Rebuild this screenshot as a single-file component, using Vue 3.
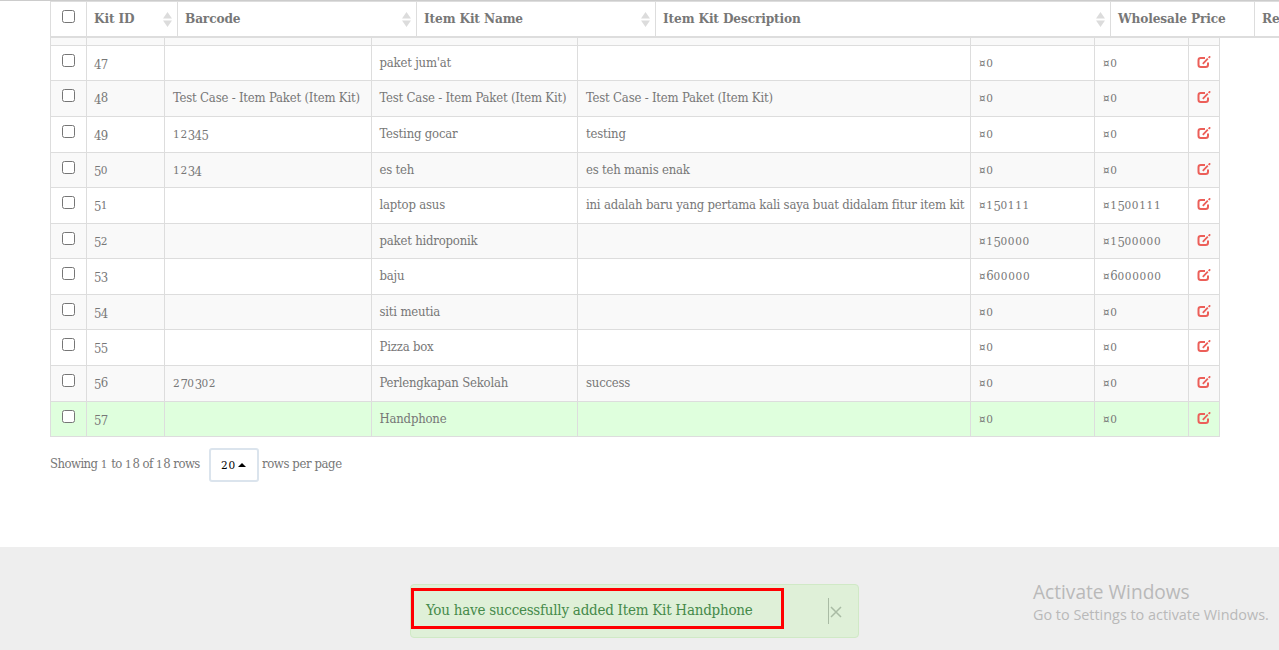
<script setup>
import { h } from 'vue'

const headers = [
  { label: 'Kit ID', sort: true },
  { label: 'Barcode', sort: true },
  { label: 'Item Kit Name', sort: true },
  { label: 'Item Kit Description', sort: true },
  { label: 'Wholesale Price' },
  { label: 'Retail Price' },
]

const paket = 'Test Case - Item Paket (Item Kit)'
const rows = [
  { id: '47', name: "paket jum'at", wholesale: '0', retail: '0', height: 35 },
  { id: '48', barcode: paket, name: paket, description: paket, wholesale: '0', retail: '0', height: 36 },
  { id: '49', barcode: '12345', name: 'Testing gocar', description: 'testing', wholesale: '0', retail: '0', height: 36 },
  { id: '50', barcode: '1234', name: 'es teh', description: 'es teh manis enak', wholesale: '0', retail: '0', height: 35 },
  { id: '51', name: 'laptop asus', description: 'ini adalah baru yang pertama kali saya buat didalam fitur item kit', wholesale: '150111', retail: '1500111', height: 36 },
  { id: '52', name: 'paket hidroponik', wholesale: '150000', retail: '1500000', height: 35 },
  { id: '53', name: 'baju', wholesale: '600000', retail: '6000000', height: 36 },
  { id: '54', name: 'siti meutia', wholesale: '0', retail: '0', height: 35 },
  { id: '55', name: 'Pizza box', wholesale: '0', retail: '0', height: 36 },
  { id: '56', barcode: '270302', name: 'Perlengkapan Sekolah', description: 'success', wholesale: '0', retail: '0', height: 36 },
  { id: '57', name: 'Handphone', wholesale: '0', retail: '0', height: 35, added: true },
]

// Old-style figures: 0-2 at x-height, 3-5, 7 and 9 dropped under the baseline.
function OldStyle(props) {
  const runs = String(props.text || '').match(/[012]+|[34579]+|[^0-9]+|[68]+/g) || []
  return h('span', { class: 'figures' }, runs.map((run) => {
    const kind = /[012]/.test(run) ? 'low' : /[34579]/.test(run) ? 'drop' : /[68]/.test(run) ? 'high' : 'plain'
    return h('span', { class: kind }, run)
  }))
}
OldStyle.props = ['text']
</script>

<template>
  <div class="page">
    <div class="head">
      <div class="th pick"><span class="box"></span></div>
      <div v-for="c in headers" :key="c.label" class="th">
        <span>{{ c.label }}</span>
        <svg v-if="c.sort" class="sort" width="9" height="15" viewBox="0 0 9 15">
          <path d="M0 6.5 4.5 0 9 6.5ZM0 8.5 4.5 15 9 8.5Z" fill="#dcdcdc" />
        </svg>
      </div>
    </div>

    <div class="body">
      <div class="row stub"><i v-for="n in 8" :key="n" class="td"></i></div>
      <div v-for="(r, i) in rows" :key="r.id" class="row" :class="{ odd: i % 2 === 1, added: r.added }" :style="{ height: r.height + 'px' }">
        <div class="td pick"><span class="box"></span></div>
        <div class="td id"><OldStyle :text="r.id" /></div>
        <div class="td"><OldStyle :text="r.barcode" /></div>
        <div class="td name">{{ r.name }}</div>
        <div class="td">{{ r.description }}</div>
        <div class="td price"><span class="cur">¤</span><OldStyle :text="r.wholesale" /></div>
        <div class="td price"><span class="cur">¤</span><OldStyle :text="r.retail" /></div>
        <div class="td edit">
          <svg width="14" height="13" viewBox="0 0 14 13" fill="none" stroke="#ec5f59">
            <path d="M8 2H3.8Q1.5 2 1.5 4.3V8.7Q1.5 11 3.8 11H8.7Q11 11 11 8.7V6.5" stroke-width="2" />
            <path d="M5.8 7.8 10.8 2.6M11.6 1.8 13.2 .3" stroke-width="1.8" />
          </svg>
        </div>
      </div>
    </div>

    <div class="pager">
      <OldStyle class="showing" text="Showing 1 to 18 of 18 rows" />
      <span class="size"><OldStyle text="20" /><i class="caret"></i></span>
      <span class="per">rows per page</span>
    </div>

    <div class="footer">
      <div class="alert">
        <div class="message">You have successfully added Item Kit Handphone</div>
        <div class="close">
          <svg width="12" height="12" viewBox="0 0 12 12"><path d="M1 1 11 11M11 1 1 11" stroke="#a9bba4" stroke-width="1.5" /></svg>
        </div>
      </div>
      <div class="windows">
        <div class="activate">Activate Windows</div>
        <div class="settings">Go to Settings to activate Windows.</div>
      </div>
    </div>
  </div>
</template>

<style>
body { margin: 0; overflow: hidden; background: #fff; }
</style>

<style scoped>
.page { width: 1279px; height: 650px; overflow: hidden; display: flex; flex-direction: column; box-sizing: border-box; border-top: 1px solid #ccc; font-family: "DejaVu Serif Condensed", "DejaVu Serif", serif; font-stretch: condensed; font-size: 13px; color: #777; letter-spacing: -0.2px; }
.page * { box-sizing: border-box; }
.head { display: grid; grid-template-columns: 36px 91px 239px 239px 455px 144px 140px; height: 37px; flex: none; margin-left: 50px; border-top: 1px solid #ddd; border-bottom: 2px solid #ddd; border-left: 1px solid #ddd; font-weight: bold; font-size: 13.5px; letter-spacing: -0.13px; }
.th { display: flex; justify-content: space-between; border-right: 1px solid #ddd; padding: 8px 5px 0 7px; line-height: 17px; white-space: nowrap; }
.sort { margin-top: 2px; }
.th.pick { padding: 8px 0 0 11px; }
.box { display: block; width: 13px; height: 13px; border: 1px solid #767676; border-radius: 2.5px; background: #fff; }
.body { width: 1170px; margin-left: 50px; border-left: 1px solid #ddd; flex: none; }
.row { display: grid; grid-template-columns: 36px 78px 207px 206px 393px 124px 94px 31px; border-bottom: 1px solid #ddd; background: #fff; }
.row.odd, .row.stub { background: #f9f9f9; }
.row.stub { height: 8px; }
.row.added { background: #dfffdd; }
.td { border-right: 1px solid #ddd; padding: 8px 0 0 8px; line-height: 17px; white-space: nowrap; }
.td.name { padding-left: 7.5px; }
.stub .td { padding: 0; }
.td.pick { padding: 8px 0 0 11px; }
.td.id { padding: 8px 0 0 7px; }
.td.edit { padding: 10px 0 0 8px; }
.td.edit svg { display: block; }
.cur { font-size: 11.5px; letter-spacing: 0.6px; }
.figures :deep(.low) { font-family: "DejaVu Serif", serif; font-stretch: normal; font-size: 10.5px; letter-spacing: 0.7px; }
.figures :deep(.drop) { display: inline-block; line-height: 1; transform: translateY(2px); letter-spacing: -0.6px; }
.pager { display: flex; height: 34px; margin: 11px 0 0 50px; flex: none; line-height: 31px; white-space: nowrap; letter-spacing: -0.4px; }
.showing { width: 159px; letter-spacing: -0.55px; }
.size { width: 50px; height: 34px; border: 2px solid #dbe4ed; border-radius: 3px; color: #000; padding-left: 10px; display: flex; align-items: center; }
.caret { border: 4px solid transparent; border-top: 0; border-bottom: 4px solid #000; margin-left: 2px; }
.per { margin-left: 3px; }
.footer { margin-top: 65px; flex: 1; background: #eee; display: flex; align-items: flex-start; }
.alert { margin: 37px 0 0 410px; width: 449px; height: 54px; border: 1px solid #d0e9c6; border-radius: 4px; background: #dff0d8; display: flex; flex: none; }
.message { margin-top: 3px; width: 373px; height: 41px; border: 3px solid #f00; padding-left: 12px; color: #458a4a; font-size: 15px; line-height: 39px; letter-spacing: -0.24px; white-space: nowrap; }
.close { margin: 13px 0 0 44px; height: 26px; border-left: 1px solid #a9bba4; padding: 8px 0 0 1px; }
.close svg { display: block; }
.windows { margin: 33px 0 0 174px; font-family: "Open Sans", sans-serif; font-stretch: normal; color: #b9b9b9; white-space: nowrap; letter-spacing: 0; }
.activate { font-size: 19.1px; line-height: 25px; }
.settings { font-size: 14.4px; line-height: 20px; }
</style>
